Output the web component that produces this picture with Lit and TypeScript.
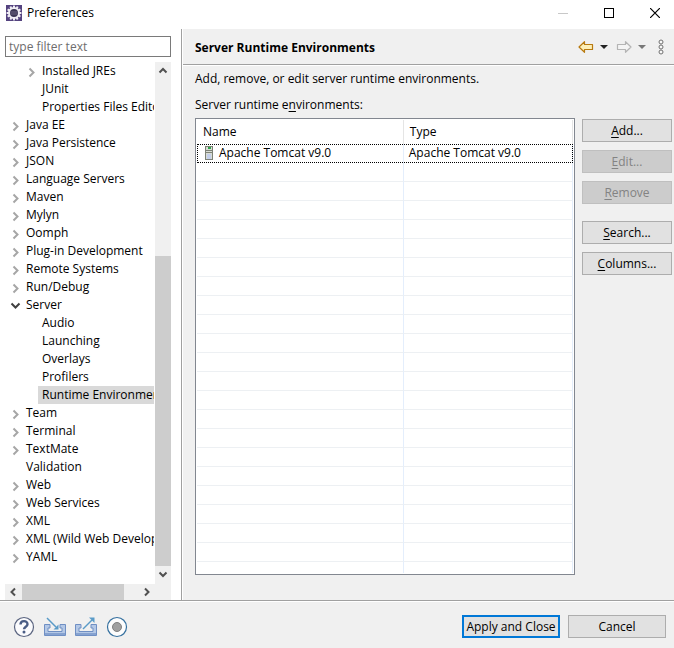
import { LitElement, html, svg, css, nothing } from "lit";
import { customElement, property, state } from "lit/decorators.js";
import { classMap } from "lit/directives/class-map.js";

interface TreeNode {
  label: string;
  level: number;
  twist?: "open" | "closed";
}

const top = (label: string): TreeNode => ({ label, level: 0, twist: "closed" });
const leaf = (label: string): TreeNode => ({ label, level: 1 });

const NODES: TreeNode[] = [
  { label: "Installed JREs", level: 1, twist: "closed" },
  leaf("JUnit"),
  leaf("Properties Files Editor"),
  top("Java EE"),
  top("Java Persistence"),
  top("JSON"),
  top("Language Servers"),
  top("Maven"),
  top("Mylyn"),
  top("Oomph"),
  top("Plug-in Development"),
  top("Remote Systems"),
  top("Run/Debug"),
  { label: "Server", level: 0, twist: "open" },
  leaf("Audio"),
  leaf("Launching"),
  leaf("Overlays"),
  leaf("Profilers"),
  leaf("Runtime Environments"),
  top("Team"),
  top("Terminal"),
  top("TextMate"),
  { label: "Validation", level: 0 },
  top("Web"),
  top("Web Services"),
  top("XML"),
  top("XML (Wild Web Developer)"),
  top("YAML"),
];

const EMPTY_ROWS = 21;

const arrow = (points: string) => html`<svg width="16" height="16" viewBox="0 0 16 16" aria-hidden="true">
  <polyline points=${points} fill="none" stroke="#505050" stroke-width="2"></polyline>
</svg>`;

const base = css`
  :host,
  * {
    box-sizing: border-box;
  }
  svg {
    display: block;
    flex: none;
  }
  button {
    font: inherit;
    color: inherit;
    margin: 0;
    padding: 0;
    border: 0;
    background: none;
    display: flex;
    align-items: center;
    justify-content: center;
  }
`;

@customElement("title-bar")
export class TitleBar extends LitElement {
  static styles = [
    base,
    css`
      :host {
        display: flex;
        align-items: center;
        gap: 8px;
        height: 29px;
        padding: 0 0 3px 6px;
        background: #fff;
      }
      h1 {
        flex: 1;
        display: flex;
        align-items: center;
        gap: 5px;
        margin: 0;
        font-size: inherit;
        font-weight: 400;
      }
      button {
        width: 38px;
        height: 26px;
      }
    `,
  ];

  render() {
    const teeth = Array.from({ length: 12 }, (_, i) => i * 30);
    return html`
      <h1>
        <svg width="16" height="16" viewBox="0 0 16 16" aria-hidden="true">
          <rect width="16" height="16" fill="#54437f"></rect>
          ${teeth.map(
            (a) => svg`<rect x="7" y="0.6" width="2" height="3" fill="#f0eef4" transform="rotate(${a} 8 8)"></rect>`
          )}
          <circle cx="8" cy="8" r="5" fill="#3b3553" stroke="#f0eef4" stroke-width="2"></circle>
          <path d="M4.500 7h7M4.500 9h7" stroke="#6b6580"></path>
        </svg>
        Preferences
      </h1>
      <button aria-label="Minimize">
        <svg width="10" height="11" viewBox="0 0 10 11"><path d="M0 5.500h10" stroke="#c8c8c8"></path></svg>
      </button>
      <button aria-label="Maximize">
        <svg width="10" height="10" viewBox="0 0 10 10">
          <rect x="0.500" y="0.500" width="9" height="9" fill="none" stroke="#000"></rect>
        </svg>
      </button>
      <button aria-label="Close">
        <svg width="10" height="10" viewBox="0 0 10 10">
          <path d="M0 0L10 10M10 0L0 10" stroke="#000" stroke-width="1.200"></path>
        </svg>
      </button>
    `;
  }
}

@customElement("preference-tree")
export class PreferenceTree extends LitElement {
  @state() private selected = "Runtime Environments";

  static styles = [
    base,
    css`
      :host {
        display: flex;
        flex-direction: column;
        padding: 7px 10px 0 5px;
        background: #fff;
        min-width: 0;
      }
      input {
        width: 100%;
        height: 21px;
        margin-bottom: 5px;
        padding: 0 3px;
        border: 1px solid #7a7a7a;
        font: inherit;
        color: #000;
        outline: 0;
      }
      input::placeholder {
        color: #6d6d6d;
        opacity: 1;
      }
      .pane {
        flex: 1;
        display: grid;
        grid-template-columns: minmax(0, 1fr) 16px;
        grid-template-rows: 1fr 16px;
      }
      ul {
        margin: 0 1px 0 0;
        padding: 0;
        list-style: none;
        overflow: hidden;
      }
      li {
        display: flex;
        height: 18px;
        line-height: 18px;
        white-space: nowrap;
      }
      .child {
        padding-left: 16px;
      }
      .twist {
        flex: none;
        width: 17px;
        padding: 5px 0 0 5px;
      }
      .label {
        padding: 0 4px;
      }
      .selected .label {
        background: #d9d9d9;
      }
      .bar {
        display: flex;
        background: #f0f0f0;
      }
      .vertical {
        flex-direction: column;
        padding-bottom: 2px;
      }
      .thumb {
        background: #cdcdcd;
      }
      .before {
        flex: 178;
      }
      .vertical .thumb {
        flex: 310;
      }
      .horizontal .thumb {
        flex: 101;
        margin-left: 1px;
      }
      .after {
        flex: 15;
      }
      .corner {
        background: #f0f0f0;
      }
    `,
  ];

  render() {
    return html`
      <input type="text" placeholder="type filter text" aria-label="type filter text" />
      <div class="pane">
        <ul role="tree">
          ${NODES.map(
            (n) => html`<li
              role="treeitem"
              aria-selected=${n.label === this.selected}
              class=${classMap({ child: n.level === 1, selected: n.label === this.selected })}
              @click=${() => (this.selected = n.label)}
            >
              <span class="twist">
                ${n.twist
                  ? html`<svg width="12" height="12" viewBox="0 0 12 12" aria-hidden="true">
                      ${n.twist === "open"
                        ? svg`<polyline points="1.500,2.500 5.500,6.500 9.500,2.500" fill="none" stroke="#404040" stroke-width="2"></polyline>`
                        : svg`<polyline points="3.500,1.500 7.500,5.500 3.500,9.500" fill="none" stroke="#a6a6a6" stroke-width="2"></polyline>`}
                    </svg>`
                  : nothing}
              </span>
              <span class="label">${n.label}</span>
            </li>`
          )}
        </ul>
        <div class="bar vertical">
          <button aria-label="Scroll up">${arrow("4.5,10.5 8,7 11.5,10.5")}</button>
          <span class="before"></span>
          <span class="thumb"></span>
          <button aria-label="Scroll down">${arrow("4.5,6.5 8,10 11.5,6.5")}</button>
        </div>
        <div class="bar horizontal">
          <button aria-label="Scroll left">${arrow("10,4.5 6.5,8 10,11.5")}</button>
          <span class="thumb"></span>
          <span class="after"></span>
          <button aria-label="Scroll right">${arrow("6,4.5 9.5,8 6,11.5")}</button>
        </div>
        <div class="corner"></div>
      </div>
    `;
  }
}

@customElement("push-button")
export class PushButton extends LitElement {
  @property() label = "";
  @property({ type: Boolean }) mnemonic = false;
  @property({ type: Boolean }) disabled = false;
  @property({ type: Boolean }) primary = false;

  static styles = [
    base,
    css`
      :host {
        display: block;
      }
      button {
        width: 100%;
        height: 23px;
        border: 1px solid #adadad;
        background: #e1e1e1;
        white-space: pre;
      }
      button:disabled {
        border-color: #bfbfbf;
        background: #ccc;
        color: #838383;
      }
      .primary {
        border: 2px solid #0078d7;
      }
      u {
        text-underline-offset: 2px;
      }
    `,
  ];

  render() {
    return html`<button ?disabled=${this.disabled} class=${classMap({ primary: this.primary })}>
      ${this.mnemonic ? html`<span><u>${this.label[0]}</u>${this.label.slice(1)}</span>` : html`<span>${this.label}</span>`}
    </button>`;
  }
}

@customElement("runtime-page")
export class RuntimePage extends LitElement {
  static styles = [
    base,
    css`
      :host {
        display: flex;
        flex-direction: column;
        min-width: 0;
      }
      header {
        display: flex;
        align-items: center;
        height: 36px;
        padding: 0 8px 0 12px;
        border-bottom: 1px solid #a0a0a0;
        box-shadow: 0 1px #fff;
      }
      h2 {
        flex: 1;
        margin: 0;
        padding-top: 2px;
        font-size: 12px;
        font-weight: 700;
      }
      .body {
        flex: 1;
        display: flex;
        flex-direction: column;
        padding: 5px 2px 25px 12px;
      }
      p {
        margin: 0 0 8px;
        line-height: 18px;
      }
      .caption {
        margin-bottom: 4px;
      }
      u {
        text-underline-offset: 2px;
      }
      .columns {
        flex: 1;
        display: flex;
        gap: 7px;
      }
      .frame {
        flex: 1;
        padding: 1px;
        border: 1px solid #828790;
        background: #fff;
      }
      table {
        width: 100%;
        height: 100%;
        table-layout: fixed;
        border-collapse: separate;
        border-spacing: 0;
      }
      .name {
        width: 55%;
      }
      th,
      td {
        height: 19px;
        padding: 0 5px;
        text-align: left;
        font-weight: 400;
        line-height: 16px;
        border-right: 1px solid #e4eefc;
        border-bottom: 1px solid #edf0f3;
      }
      th {
        height: 24px;
        padding-left: 6px;
        border-right-color: #e5e5e5;
        border-bottom: 0;
      }
      .entry {
        outline: 1px dotted #000;
        outline-offset: -1px;
      }
      .entry td {
        border-bottom-color: transparent;
      }
      .item {
        display: flex;
        align-items: center;
        gap: 3px;
      }
      .rest td {
        height: auto;
        border-bottom: 0;
      }
      .buttons {
        width: 90px;
        display: flex;
        flex-direction: column;
        gap: 8px;
        padding-top: 1px;
      }
      .gap {
        margin-top: 9px;
      }
    `,
  ];

  render() {
    return html`
      <header>
        <h2>Server Runtime Environments</h2>
        <button aria-label="Back">
          <svg width="16" height="16" viewBox="0 0 16 16">
            <path d="M1 8L6.500 2.700V5.500H14.500V10.500H6.500V13.300Z" fill="#fdf0b8" stroke="#b87a10" stroke-width="1.200" stroke-linejoin="round"></path>
          </svg>
        </button>
        <button aria-label="Back history">
          <svg width="22" height="16" viewBox="0 0 22 16"><path d="M6 6h8l-4 4z" fill="#222"></path></svg>
        </button>
        <button aria-label="Forward">
          <svg width="16" height="16" viewBox="0 0 16 16">
            <path d="M15 8L9.500 2.700V5.500H1.500V10.500H9.500V13.300Z" fill="#f4f4f4" stroke="#b4b4b4" stroke-width="1.200" stroke-linejoin="round"></path>
          </svg>
        </button>
        <button aria-label="Forward history">
          <svg width="22" height="16" viewBox="0 0 22 16"><path d="M6 6h8l-4 4z" fill="#777"></path></svg>
        </button>
        <button aria-label="View menu">
          <svg width="12" height="16" viewBox="0 0 12 16">
            <g fill="#f8f8f8" stroke="#707070">
              <circle cx="7" cy="3" r="2"></circle>
              <circle cx="7" cy="8" r="2"></circle>
              <circle cx="7" cy="13" r="2"></circle>
            </g>
          </svg>
        </button>
      </header>
      <div class="body">
        <p>Add, remove, or edit server runtime environments.</p>
        <p class="caption" id="caption">Server runtime e<u>n</u>vironments:</p>
        <div class="columns">
          <div class="frame">
            <table aria-labelledby="caption">
              <colgroup>
                <col class="name" />
                <col />
              </colgroup>
              <thead>
                <tr>
                  <th>Name</th>
                  <th>Type</th>
                </tr>
              </thead>
              <tbody>
                <tr class="entry">
                  <td>
                    <span class="item">
                      <svg width="14" height="16" viewBox="0 0 14 16" aria-hidden="true">
                        <rect x="3.500" y="1.500" width="7" height="13" fill="#d8dcd4" stroke="#7d8176"></rect>
                        <rect x="6" y="2" width="3" height="2" fill="#2fa04a"></rect>
                        <path d="M4 5.500h6M4 7.500h6" stroke="#7d8176"></path>
                        <rect x="5" y="9" width="4" height="5" fill="#c4cfea"></rect>
                      </svg>
                      Apache Tomcat v9.0
                    </span>
                  </td>
                  <td>Apache Tomcat v9.0</td>
                </tr>
                ${Array.from({ length: EMPTY_ROWS }, () => html`<tr><td></td><td></td></tr>`)}
                <tr class="rest"><td></td><td></td></tr>
              </tbody>
            </table>
          </div>
          <div class="buttons">
            <push-button label="Add..." mnemonic></push-button>
            <push-button label="Edit..." mnemonic disabled></push-button>
            <push-button label="Remove" mnemonic disabled></push-button>
            <push-button class="gap" label="Search..." mnemonic></push-button>
            <push-button label="Columns..." mnemonic></push-button>
          </div>
        </div>
      </div>
    `;
  }
}

@customElement("dialog-footer")
export class DialogFooter extends LitElement {
  static styles = [
    base,
    css`
      :host {
        display: flex;
        align-items: center;
        gap: 8px;
        height: 48px;
        padding: 4px 8px 0 13px;
        border-top: 1px solid #a0a0a0;
        box-shadow: inset 0 1px #fff;
      }
      .tools {
        flex: 1;
        display: flex;
        gap: 9px;
      }
      push-button {
        width: 98px;
      }
    `,
  ];

  render() {
    const tray = svg`<path d="M0.500 8.500H6V12H4V15.500H18V12H16V8.500H21.500V19.500H0.500Z" fill="#b4c8e6" stroke="#6f8fc4"></path>
      <path d="M1 18H21" stroke="#86a2d0" stroke-width="2"></path>`;
    return html`
      <div class="tools">
        <button aria-label="Help">
          <svg width="22" height="22" viewBox="0 0 22 22">
            <circle cx="11" cy="11" r="9.500" fill="#fbfbfd" stroke="#5b6580" stroke-width="1.200"></circle>
            <path d="M7.500 8.500C7.500 4 14.500 4 14.500 8.200C14.500 10.700 11 10.700 11 13.300" fill="none" stroke="#4a5d85" stroke-width="2.400"></path>
            <circle cx="11" cy="16" r="1.500" fill="#4a5d85"></circle>
          </svg>
        </button>
        <button aria-label="Import">
          <svg width="22" height="22" viewBox="0 0 22 22">${tray}
            <path d="M3 2L12 11" stroke="#5a9bc8" stroke-width="1.500"></path>
            <path d="M14.500 13.500V8.500L9.500 13.500Z" fill="#5a9bc8"></path>
          </svg>
        </button>
        <button aria-label="Export">
          <svg width="22" height="22" viewBox="0 0 22 22">${tray}
            <path d="M8 13L17 4" stroke="#5a9bc8" stroke-width="1.500"></path>
            <path d="M14 1.500H19.500V7Z" fill="#5a9bc8"></path>
          </svg>
        </button>
        <button aria-label="Recorder">
          <svg width="22" height="22" viewBox="0 0 22 22">
            <circle cx="11" cy="11" r="9.500" fill="#fdfdfd" stroke="#35709f" stroke-width="1.200"></circle>
            <circle cx="11" cy="11" r="4.500" fill="#a0a0a0" stroke="#808080"></circle>
          </svg>
        </button>
      </div>
      <push-button label="Apply and Close" primary></push-button>
      <push-button label="Cancel"></push-button>
    `;
  }
}

@customElement("app-root")
export class AppRoot extends LitElement {
  static styles = css`
    :host {
      display: flex;
      flex-direction: column;
      min-height: 100vh;
      background: #f0f0f0;
      color: #000;
      font: 12px/16px "Open Sans", "Noto Sans", sans-serif;
    }
    main {
      flex: 1;
      display: grid;
      grid-template-columns: 27% minmax(0, 1fr);
    }
    preference-tree {
      border-right: 1px solid #a0a0a0;
    }
    runtime-page {
      border-left: 1px solid #fff;
    }
  `;

  render() {
    return html`
      <title-bar></title-bar>
      <main>
        <preference-tree></preference-tree>
        <runtime-page></runtime-page>
      </main>
      <dialog-footer></dialog-footer>
    `;
  }
}
